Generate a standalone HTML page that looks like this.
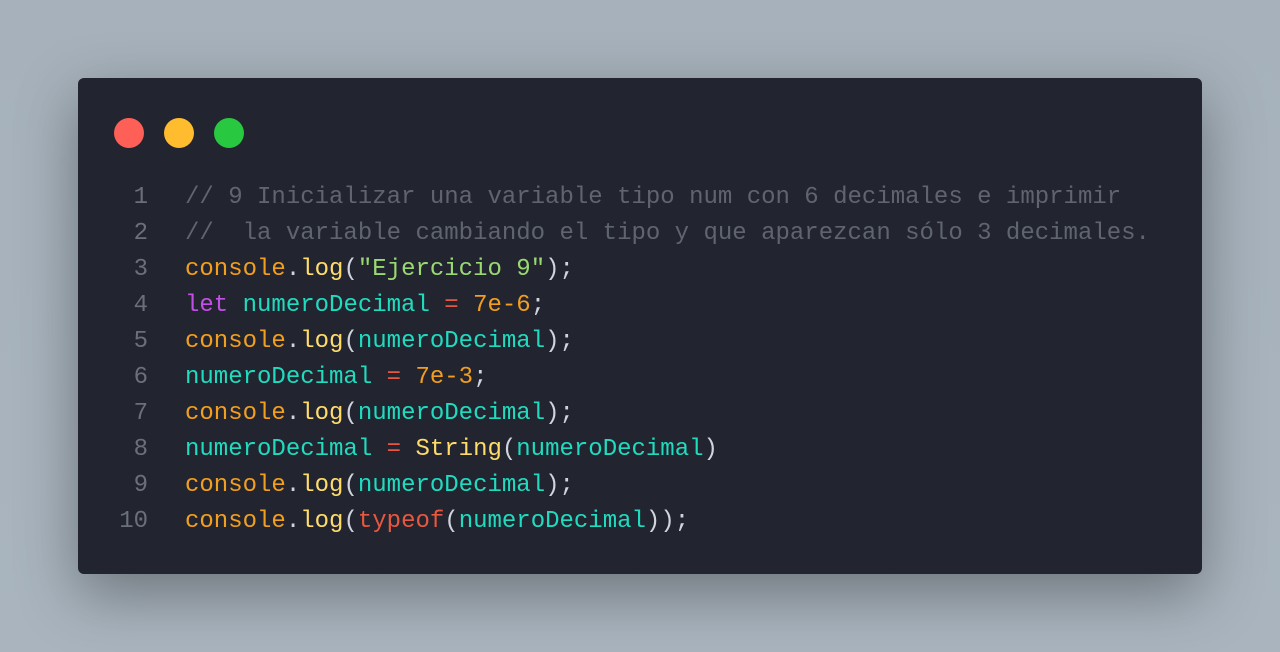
<!DOCTYPE html>
<html><head><meta charset="utf-8"><style>
html,body{margin:0;padding:0;}
body{width:1280px;height:652px;overflow:hidden;background:linear-gradient(180deg,#a6b1bb 0%,#a9b4be 100%);position:relative;font-family:"Liberation Mono",monospace;}
.card{position:absolute;left:78px;top:78px;width:1124px;height:496px;background:#22252f;border-radius:6px;box-shadow:0 20px 60px rgba(0,0,0,0.35);}
.dot{position:absolute;top:40px;width:30px;height:30px;border-radius:50%;}
pre{position:absolute;left:0;top:102px;margin:0;font-family:"Liberation Mono",monospace;font-size:24px;line-height:36px;color:#d0d4dc;}
.ln{display:inline-block;width:70px;text-align:right;color:#6b6f7a;margin-right:37px;}
.c{color:#5f6470}.o{color:#f29e1f}.y{color:#ffdc6a}.s{color:#9ad872}.t{color:#1fdcc0}.k{color:#c44ee8}.r{color:#e8573f}.p{color:#d0d4dc}
</style></head><body>
<div class="card">
<div class="dot" style="left:36px;background:#fe5f57"></div>
<div class="dot" style="left:86px;background:#febc2e"></div>
<div class="dot" style="left:136px;background:#28c840"></div>
<pre><span class="ln">1</span><span class="c">// 9 Inicializar una variable tipo num con 6 decimales e imprimir</span>
<span class="ln">2</span><span class="c">//  la variable cambiando el tipo y que aparezcan sólo 3 decimales.</span>
<span class="ln">3</span><span class="o">console</span><span class="p">.</span><span class="y">log</span><span class="p">(</span><span class="s">"Ejercicio 9"</span><span class="p">);</span>
<span class="ln">4</span><span class="k">let</span> <span class="t">numeroDecimal</span> <span class="r">=</span> <span class="o">7e-6</span><span class="p">;</span>
<span class="ln">5</span><span class="o">console</span><span class="p">.</span><span class="y">log</span><span class="p">(</span><span class="t">numeroDecimal</span><span class="p">);</span>
<span class="ln">6</span><span class="t">numeroDecimal</span> <span class="r">=</span> <span class="o">7e-3</span><span class="p">;</span>
<span class="ln">7</span><span class="o">console</span><span class="p">.</span><span class="y">log</span><span class="p">(</span><span class="t">numeroDecimal</span><span class="p">);</span>
<span class="ln">8</span><span class="t">numeroDecimal</span> <span class="r">=</span> <span class="y">String</span><span class="p">(</span><span class="t">numeroDecimal</span><span class="p">)</span>
<span class="ln">9</span><span class="o">console</span><span class="p">.</span><span class="y">log</span><span class="p">(</span><span class="t">numeroDecimal</span><span class="p">);</span>
<span class="ln">10</span><span class="o">console</span><span class="p">.</span><span class="y">log</span><span class="p">(</span><span class="r">typeof</span><span class="p">(</span><span class="t">numeroDecimal</span><span class="p">));</span></pre>
</div>
</body></html>
